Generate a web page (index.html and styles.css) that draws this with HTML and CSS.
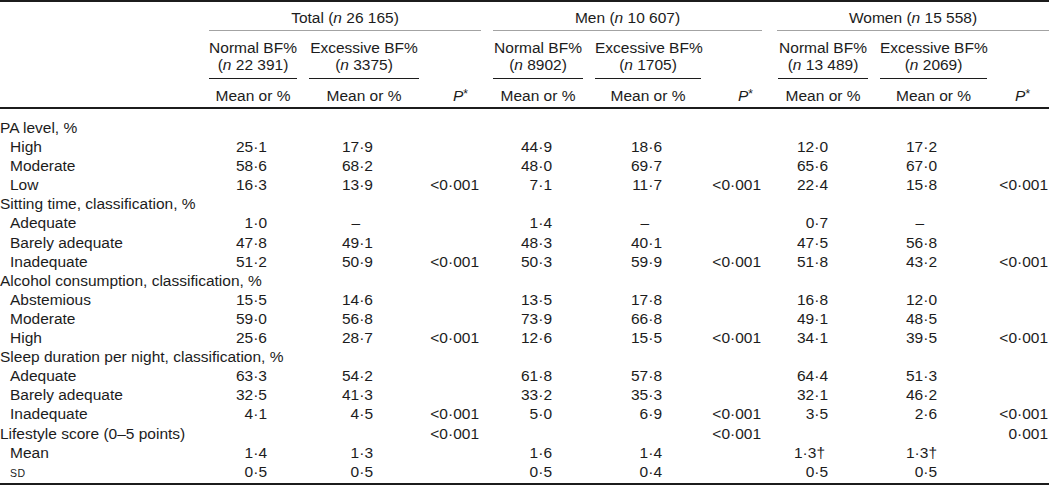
FILE: index.html
```html
<!DOCTYPE html>
<html lang="en">
<head>
<meta charset="utf-8">
<title>Lifestyle by body fat</title>
<link rel="stylesheet" href="styles.css">
</head>
<body>
<table class="tbl">
  <colgroup>
    <col class="c-label"><col class="c-tn"><col class="c-te"><col class="c-tp">
    <col class="c-mn"><col class="c-me"><col class="c-mp">
    <col class="c-wn"><col class="c-we"><col class="c-wp">
  </colgroup>
  <thead>
    <tr class="h1">
      <th class="corner" rowspan="3"></th>
      <th colspan="3"><div class="grp grp-t">Total (<i>n</i> 26 165)</div></th>
      <th colspan="3"><div class="grp grp-m">Men (<i>n</i> 10 607)</div></th>
      <th colspan="3"><div class="grp grp-w">Women (<i>n</i> 15 558)</div></th>
    </tr>
    <tr class="h2">
      <th><div class="sub sub-n">Normal BF%<br>(<i>n</i> 22 391)</div></th>
      <th><div class="sub sub-e">Excessive BF%<br>(<i>n</i> 3375)</div></th>
      <th></th>
      <th><div class="sub sub-n">Normal BF%<br>(<i>n</i> 8902)</div></th>
      <th><div class="sub sub-e">Excessive BF%<br>(<i>n</i> 1705)</div></th>
      <th></th>
      <th><div class="sub sub-n">Normal BF%<br>(<i>n</i> 13 489)</div></th>
      <th><div class="sub sub-e">Excessive BF%<br>(<i>n</i> 2069)</div></th>
      <th></th>
    </tr>
    <tr class="h3">
      <th><div class="mo sub-n">Mean or %</div></th>
      <th><div class="mo sub-e">Mean or %</div></th>
      <th class="pstar"><i>P</i><sup>*</sup></th>
      <th><div class="mo sub-n">Mean or %</div></th>
      <th><div class="mo sub-e">Mean or %</div></th>
      <th class="pstar"><i>P</i><sup>*</sup></th>
      <th><div class="mo sub-n">Mean or %</div></th>
      <th><div class="mo sub-e">Mean or %</div></th>
      <th class="pstar"><i>P</i><sup>*</sup></th>
    </tr>
  </thead>
  <tbody>
    <tr class="first"><td>PA level, %</td><td></td><td></td><td></td><td></td><td></td><td></td><td></td><td></td><td></td></tr>
    <tr><td class="ind">High</td><td>25·1</td><td>17·9</td><td></td><td>44·9</td><td>18·6</td><td></td><td>12·0</td><td>17·2</td><td></td></tr>
    <tr><td class="ind">Moderate</td><td>58·6</td><td>68·2</td><td></td><td>48·0</td><td>69·7</td><td></td><td>65·6</td><td>67·0</td><td></td></tr>
    <tr><td class="ind">Low</td><td>16·3</td><td>13·9</td><td>&lt;0·001</td><td>7·1</td><td>11·7</td><td>&lt;0·001</td><td>22·4</td><td>15·8</td><td>&lt;0·001</td></tr>
    <tr><td>Sitting time, classification, %</td><td></td><td></td><td></td><td></td><td></td><td></td><td></td><td></td><td></td></tr>
    <tr><td class="ind">Adequate</td><td>1·0</td><td><span class="dash">–</span></td><td></td><td>1·4</td><td><span class="dash">–</span></td><td></td><td>0·7</td><td><span class="dash">–</span></td><td></td></tr>
    <tr><td class="ind">Barely adequate</td><td>47·8</td><td>49·1</td><td></td><td>48·3</td><td>40·1</td><td></td><td>47·5</td><td>56·8</td><td></td></tr>
    <tr><td class="ind">Inadequate</td><td>51·2</td><td>50·9</td><td>&lt;0·001</td><td>50·3</td><td>59·9</td><td>&lt;0·001</td><td>51·8</td><td>43·2</td><td>&lt;0·001</td></tr>
    <tr><td>Alcohol consumption, classification, %</td><td></td><td></td><td></td><td></td><td></td><td></td><td></td><td></td><td></td></tr>
    <tr><td class="ind">Abstemious</td><td>15·5</td><td>14·6</td><td></td><td>13·5</td><td>17·8</td><td></td><td>16·8</td><td>12·0</td><td></td></tr>
    <tr><td class="ind">Moderate</td><td>59·0</td><td>56·8</td><td></td><td>73·9</td><td>66·8</td><td></td><td>49·1</td><td>48·5</td><td></td></tr>
    <tr><td class="ind">High</td><td>25·6</td><td>28·7</td><td>&lt;0·001</td><td>12·6</td><td>15·5</td><td>&lt;0·001</td><td>34·1</td><td>39·5</td><td>&lt;0·001</td></tr>
    <tr><td>Sleep duration per night, classification, %</td><td></td><td></td><td></td><td></td><td></td><td></td><td></td><td></td><td></td></tr>
    <tr><td class="ind">Adequate</td><td>63·3</td><td>54·2</td><td></td><td>61·8</td><td>57·8</td><td></td><td>64·4</td><td>51·3</td><td></td></tr>
    <tr><td class="ind">Barely adequate</td><td>32·5</td><td>41·3</td><td></td><td>33·2</td><td>35·3</td><td></td><td>32·1</td><td>46·2</td><td></td></tr>
    <tr><td class="ind">Inadequate</td><td>4·1</td><td>4·5</td><td>&lt;0·001</td><td>5·0</td><td>6·9</td><td>&lt;0·001</td><td>3·5</td><td>2·6</td><td>&lt;0·001</td></tr>
    <tr><td>Lifestyle score (0–5 points)</td><td></td><td></td><td>&lt;0·001</td><td></td><td></td><td>&lt;0·001</td><td></td><td></td><td>0·001</td></tr>
    <tr><td class="ind">Mean</td><td>1·4</td><td>1·3</td><td></td><td>1·6</td><td>1·4</td><td></td><td><span class="dag">1·3†</span></td><td>1·3†</td><td></td></tr>
    <tr><td class="ind"><span class="sc">SD</span></td><td>0·5</td><td>0·5</td><td></td><td>0·5</td><td>0·4</td><td></td><td>0·5</td><td>0·5</td><td></td></tr>
  </tbody>
</table>
</body>
</html>
```
FILE: styles.css
```css
html, body {
  margin: 0;
  padding: 0;
  background: #ffffff;
}

body {
  font-family: "Liberation Sans", Arial, sans-serif;
  font-size: 15.5px;
  color: #1c1c1c;
}

.tbl {
  width: 1049px;
  table-layout: fixed;
  border-collapse: separate;
  border-spacing: 0;
  border-top: 2px solid #1c1c1c;
  border-bottom: 2px solid #1c1c1c;
}

.c-label { width: 203px; }
.c-tn { width: 100px; }
.c-te { width: 116px; }
.c-tp { width: 68px; }
.c-mn { width: 102px; }
.c-me { width: 112px; }
.c-mp { width: 71px; }
.c-wn { width: 102px; }
.c-we { width: 113px; }
.c-wp { width: 62px; }

.tbl th {
  font-weight: normal;
  padding: 0;
  text-align: center;
  vertical-align: bottom;
  white-space: nowrap;
}

.tbl i {
  font-style: italic;
}

.corner {
  border-bottom: 2px solid #1c1c1c;
}

/* group header row */
.grp {
  padding: 6px 0 3px;
  line-height: 19px;
  border-bottom: 1px solid #a3a3a3;
  text-align: center;
}
.grp-t { margin: 0 6px; }
.grp-m { margin: 0 10px 0 6px; }
.grp-w { margin: 0 0 0 5px; }

/* sub header row */
.sub {
  padding: 8px 0 5px;
  line-height: 17px;
  border-bottom: 1px solid #1c1c1c;
  text-align: center;
}
.sub-n { margin: 0 6px; }
.sub-e { margin: 0 0 0 6px; }

/* mean row */
.h3 th {
  padding: 7px 0 2px;
  line-height: 19px;
  border-bottom: 2px solid #1c1c1c;
}
.mo {
  text-align: center;
}
.h3 th.pstar {
  text-align: right;
  padding-right: 19px;
}
.pstar sup {
  font-size: 12px;
  line-height: 0;
  vertical-align: 3px;
}

/* body */
.tbl td {
  padding: 0;
  line-height: 19.1px;
  white-space: nowrap;
  text-align: right;
  vertical-align: top;
}
.tbl tr.first td {
  padding-top: 9px;
}
.tbl td:nth-child(1) {
  text-align: left;
}
.tbl td.ind {
  padding-left: 10px;
}
.tbl td:nth-child(2) { padding-right: 36px; }
.tbl td:nth-child(3) { padding-right: 46px; }
.tbl td:nth-child(4) { padding-right: 8px; }
.tbl td:nth-child(5) { padding-right: 37px; }
.tbl td:nth-child(6) { padding-right: 39px; }
.tbl td:nth-child(7) { padding-right: 11px; }
.tbl td:nth-child(8) { padding-right: 46px; }
.tbl td:nth-child(9) { padding-right: 50px; }
.tbl td:nth-child(10) { padding-right: 1px; }

.dash {
  display: inline-block;
  margin-right: 13px;
}

.dag {
  display: inline-block;
  margin-right: 3px;
}

.sc {
  font-size: 10.5px;
  letter-spacing: 0.4px;
}
```
